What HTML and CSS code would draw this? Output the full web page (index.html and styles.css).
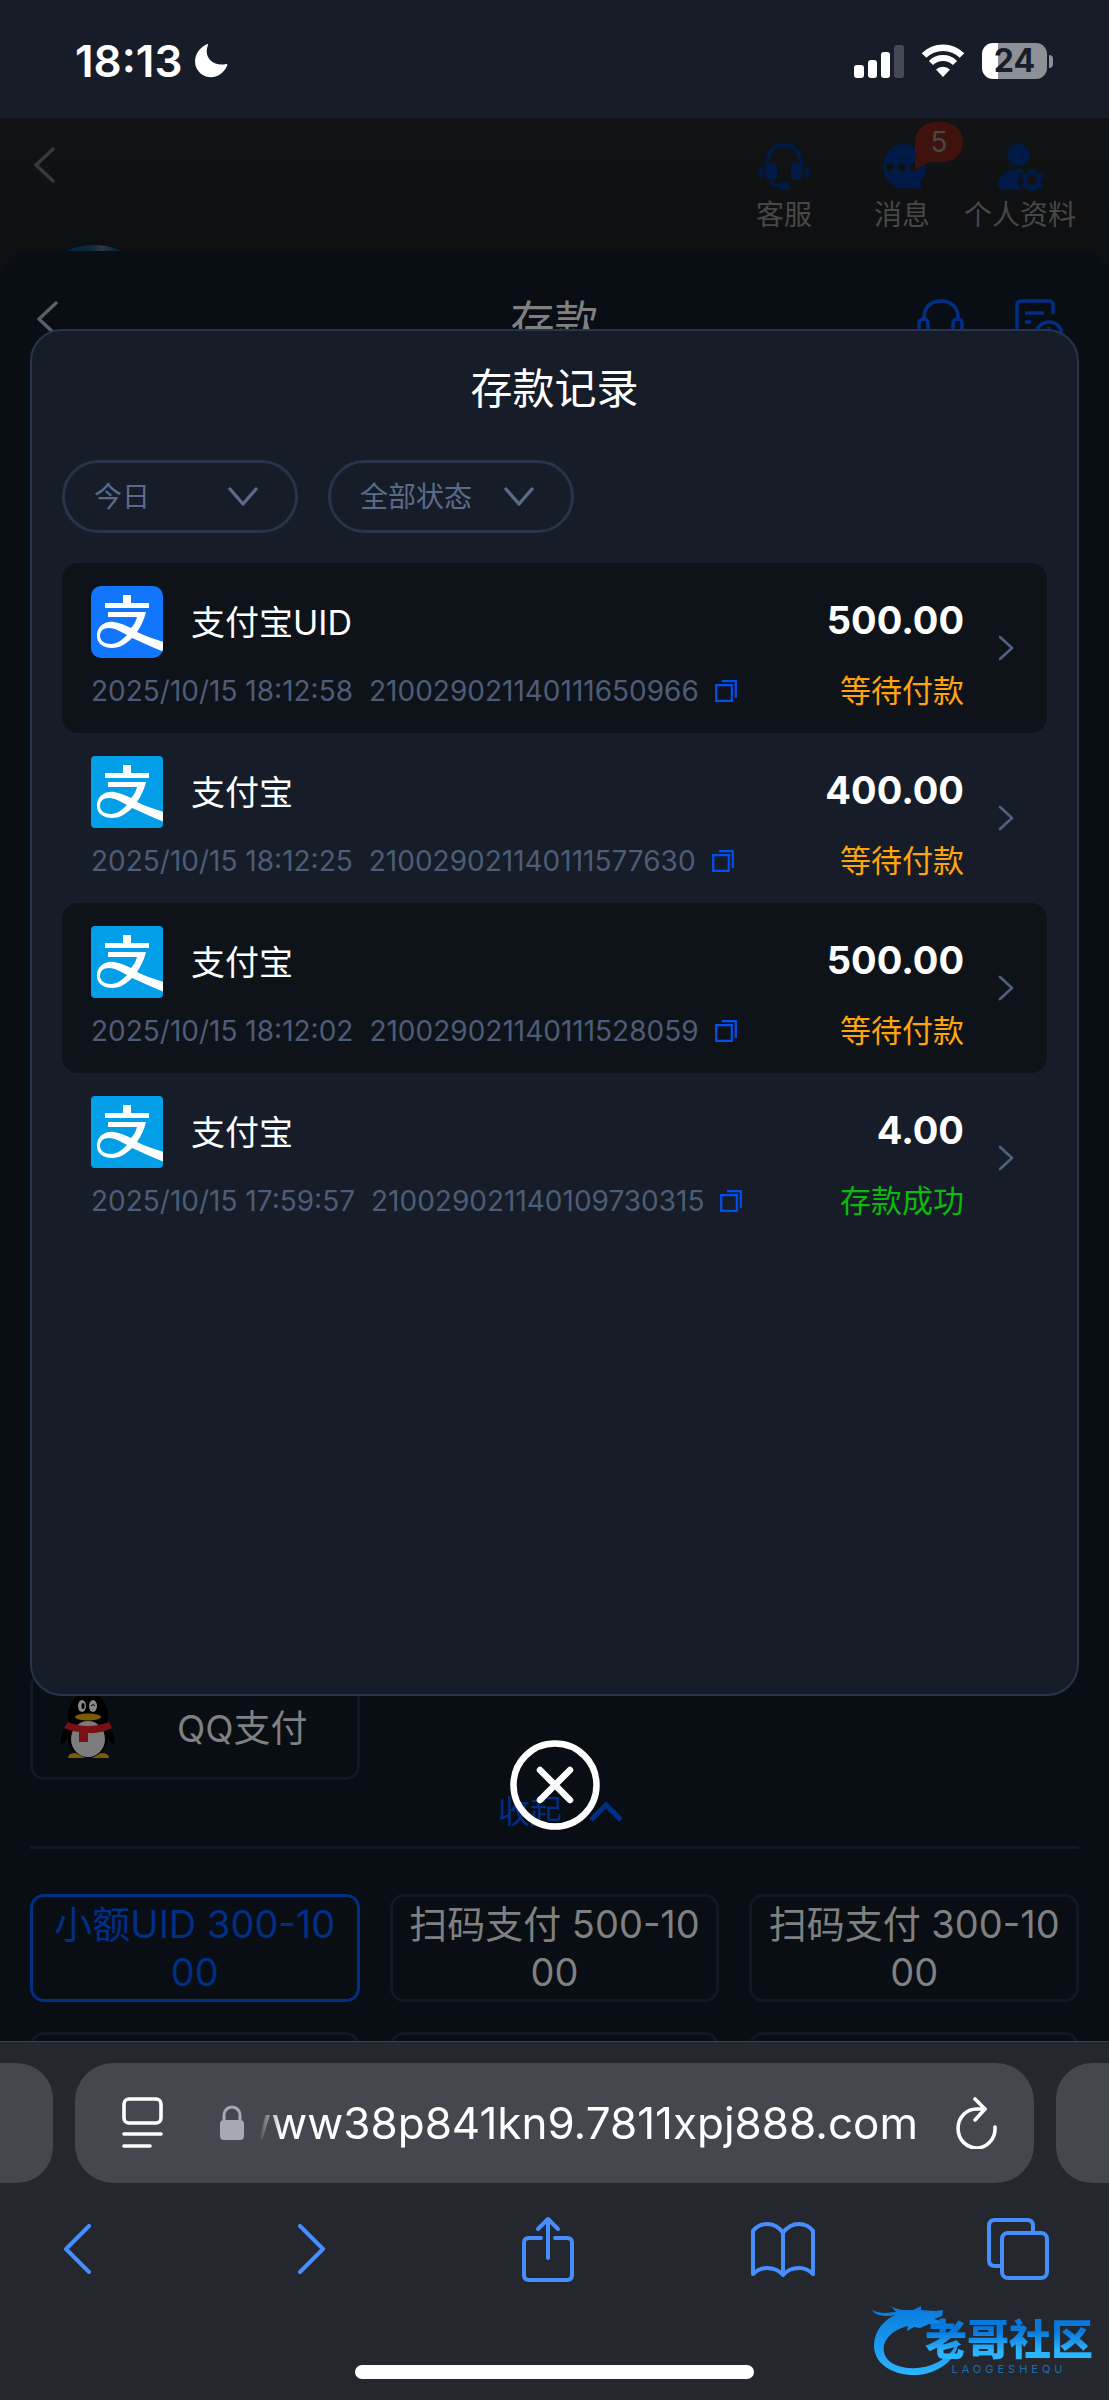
FILE: index.html
```html
<!DOCTYPE html>
<html lang="zh-CN">
<head>
<meta charset="utf-8">
<meta name="viewport" content="width=device-width, initial-scale=1">
<title>存款记录</title>
<link rel="stylesheet" href="styles.css">
</head>
<body>
<svg class="defs" aria-hidden="true">
  <symbol id="chev-left" viewBox="0 0 22 36"><path d="M20 2 3 18l17 16" fill="none" stroke="currentColor" stroke-width="3.5" stroke-linecap="round" stroke-linejoin="round"/></symbol>
  <symbol id="chev-right" viewBox="0 0 16 26"><path d="M2 2l12 11L2 24" fill="none" stroke="currentColor" stroke-width="2.6" stroke-linecap="round" stroke-linejoin="round"/></symbol>
  <symbol id="chev-down" viewBox="0 0 30 20"><path d="M2 2l13 15L28 2" fill="none" stroke="currentColor" stroke-width="3.4" stroke-linecap="round" stroke-linejoin="round"/></symbol>
  <symbol id="copy" viewBox="0 0 22 22"><path d="M1.2 5.2h15.600v15.600H1.200zM7 1.200h13.800V18" fill="none" stroke="currentColor" stroke-width="2.2"/></symbol>
  <symbol id="alipay" viewBox="0 0 72 72">
    <path d="M32 9h8v11h-8zM14 17h44v5H14z" fill="#fff"/>
    <path d="M17 26h38c-2 8-5 14-9 20 8 4 17 7 27 10v10C61 61 50 56 41 52c-6 6-12 10-20 10C11 62 5 56 6 48c1-8 8-13 17-12 6 1 11 3 17 6 3-3 5-7 6-11H17zM36 49c-6-3-11-7-18-7-6 0-9 3-9 8 0 5 5 8 11 8 6 0 11-4 16-9z" fill="#fff" fill-rule="evenodd"/>
  </symbol>
</svg>

<div class="screen">
  <div class="status-bar">
    <div class="clock">
      <span>18:13</span>
      <svg width="34" height="36" viewBox="0 0 34 36"><path d="M13.500 1C3 5-2 17 3 26c6 11 23 12 30-3 1-1 0-2-1-2-13 3-23-7-18-19 0-1 0-1.500-.5-1z" fill="#fff"/></svg>
    </div>
    <div class="signals">
      <svg width="50" height="34" viewBox="0 0 50 34"><g fill="#fff"><rect y="21" width="10" height="13" rx="3"/><rect x="14" y="16" width="9" height="18" rx="3"/><rect x="27" y="8" width="9" height="26" rx="3"/><rect x="40" y="1" width="10" height="33" rx="3" opacity=".2"/></g></svg>
      <svg width="44" height="34" viewBox="0 0 44 34"><g fill="none" stroke="#fff"><path d="M3 11.500a27 27 0 0 1 38 0" stroke-width="6.500"/><path d="M10 19a17 17 0 0 1 24 0" stroke-width="6"/></g><path d="M22 33l-7-7.500a10 10 0 0 1 14 0z" fill="#fff"/></svg>
      <div class="battery"><span>24</span></div>
    </div>
  </div>

  <main class="page">
    <div class="behind">
      <header class="profile-bar">
        <button class="icon-btn back-dim" aria-label="返回"><svg width="22" height="36"><use href="#chev-left"/></svg></button>
        <nav class="shortcuts">
          <a href="#"><svg width="52" height="48" viewBox="0 0 52 48" fill="#001a48"><path d="M9 27V20C9 8 17 2 26 2s17 6 17 18v7" fill="none" stroke="#001a48" stroke-width="4"/><rect x="8" y="20" width="11" height="17" rx="4"/><rect x="33" y="20" width="11" height="17" rx="4"/><path d="M5 23v12c-6-1-6-11 0-12zM47 23v12c6-1 6-11 0-12z"/><path d="M12 36c1 6 5 7 11 7" fill="none" stroke="#001a48" stroke-width="3"/><rect x="21" y="39" width="11" height="8" rx="4"/></svg><span>客服</span></a>
          <a href="#"><svg width="46" height="48" viewBox="0 0 46 48"><path d="M23 1a22.500 22.500 0 1 0 12 43c3 2 6 2 8 1l-2-6A23 23 0 0 0 23 1z" fill="#001a48"/><g fill="#101113"><circle cx="11" cy="24" r="4"/><circle cx="23" cy="24" r="4"/><circle cx="35" cy="24" r="4"/></g></svg><span>消息</span><b class="badge"><svg width="48" height="50" viewBox="0 0 48 50"><path d="M20 1h8a20 20 0 0 1 0 40H14L0 49V21A20 20 0 0 1 20 1z" fill="#3f120d"/></svg><i>5</i></b></a>
          <a href="#"><svg width="48" height="48" viewBox="0 0 48 48" fill="#001a48"><circle cx="23" cy="12" r="11"/><path d="M24 26C10 26 2 33 2 42c0 3 3 5 8 5h15c-5-7-3-16 3-20z"/><path d="M34 26h5l1 4 3 1 3-1 2 5-3 2v3l3 2-2 4-4-1-2 1-1 3h-5l-1-3-3-1-3 1-2-4 3-3v-2l-3-2 2-5 3 1 3-1zm2 6a5 5 0 1 0 .1 10A5 5 0 0 0 36 32z" fill-rule="evenodd"/></svg><span>个人资料</span></a>
        </nav>
        <span class="avatar"></span>
      </header>

      <section class="sheet">
        <header class="sheet-head">
          <button class="icon-btn" aria-label="返回"><svg width="22" height="36"><use href="#chev-left"/></svg></button>
          <h2>存款</h2>
          <div class="sheet-tools">
            <svg width="48" height="46" viewBox="0 0 48 46" fill="none" stroke="#002f86" stroke-width="3.500"><path d="M7 22v-3C7 8 14 2 24 2s17 6 17 17v3"/><rect x="2" y="20" width="9" height="20" rx="4"/><rect x="36" y="20" width="9" height="20" rx="4"/></svg>
            <svg width="48" height="46" viewBox="0 0 48 46" fill="none" stroke="#002f86" stroke-width="3.500"><path d="M20 44H6q-4 0-4-4V6q0-4 4-4h28q4 0 4 4v9M10 14h19M10 23h6"/><circle cx="34" cy="36" r="13"/><path d="M34 28v8"/></svg>
          </div>
        </header>
        <div class="methods">
          <button class="method">
            <svg width="58" height="66" viewBox="0 0 58 66"><path d="M29 1C17 1 9 9 9 22v8C4 38 1 45 2 52l6-6c3 9 8 15 13 17h17c5-2 9-8 11-17l6 6c2-7-2-15-6-22v-8C49 9 41 1 29 1z" fill="#000"/><ellipse cx="29" cy="46" rx="17" ry="18" fill="#7d7d7d"/><ellipse cx="23" cy="13" rx="4" ry="6" fill="#888"/><ellipse cx="34" cy="13" rx="4" ry="6" fill="#888"/><ellipse cx="24" cy="13" rx="1.500" ry="3" fill="#000"/><path d="M32 13q2-3 4 0" stroke="#000" fill="none"/><ellipse cx="29" cy="24" rx="13" ry="3.500" fill="#7c5b05"/><path d="M9 29q20 8 41 0l3 6q-12 6-24 5v9h-9v-10q-8-1-15-4z" fill="#7a1013"/><path d="M9 65q0-5 8-5l9 5zM50 65q0-5-8-5l-9 5z" fill="#7c5b05"/></svg>
            <span>QQ支付</span>
          </button>
        </div>
        <button class="collapse">收起<svg width="34" height="22" viewBox="0 0 34 22"><path d="M2 19 17 4l15 15" fill="none" stroke="#002f86" stroke-width="5"/></svg></button>
        <div class="channels">
          <button class="channel is-active">小额UID 300-1000</button>
          <button class="channel">扫码支付 500-1000</button>
          <button class="channel">扫码支付 300-1000</button>
        </div>
        <div class="channels next-row" aria-hidden="true"><div class="channel"></div><div class="channel"></div><div class="channel"></div></div>
      </section>
    </div>

    <div class="overlay">
      <section class="modal" role="dialog" aria-labelledby="modal-title">
        <h1 id="modal-title">存款记录</h1>
        <div class="filters">
          <label class="filter"><select aria-label="日期"><option>今日</option></select><svg width="30" height="20"><use href="#chev-down"/></svg></label>
          <label class="filter filter-state"><select aria-label="状态"><option>全部状态</option></select><svg width="30" height="20"><use href="#chev-down"/></svg></label>
        </div>
        <ul class="records">
          <li class="record">
            <div class="record-body">
              <div class="payee"><span class="logo logo-uid"><svg width="72" height="72"><use href="#alipay"/></svg></span><span class="payee-name">支付宝UID</span></div>
              <strong class="amount">500.00</strong>
              <div class="meta"><time>2025/10/15 18:12:58</time><span>210029021140111650966</span><button class="copy" aria-label="复制"><svg width="22" height="22"><use href="#copy"/></svg></button></div>
              <span class="state">等待付款</span>
            </div>
            <svg class="go" width="16" height="26"><use href="#chev-right"/></svg>
          </li>
          <li class="record">
            <div class="record-body">
              <div class="payee"><span class="logo"><svg width="72" height="72"><use href="#alipay"/></svg></span><span class="payee-name">支付宝</span></div>
              <strong class="amount">400.00</strong>
              <div class="meta"><time>2025/10/15 18:12:25</time><span>210029021140111577630</span><button class="copy" aria-label="复制"><svg width="22" height="22"><use href="#copy"/></svg></button></div>
              <span class="state">等待付款</span>
            </div>
            <svg class="go" width="16" height="26"><use href="#chev-right"/></svg>
          </li>
          <li class="record">
            <div class="record-body">
              <div class="payee"><span class="logo"><svg width="72" height="72"><use href="#alipay"/></svg></span><span class="payee-name">支付宝</span></div>
              <strong class="amount">500.00</strong>
              <div class="meta"><time>2025/10/15 18:12:02</time><span>210029021140111528059</span><button class="copy" aria-label="复制"><svg width="22" height="22"><use href="#copy"/></svg></button></div>
              <span class="state">等待付款</span>
            </div>
            <svg class="go" width="16" height="26"><use href="#chev-right"/></svg>
          </li>
          <li class="record">
            <div class="record-body">
              <div class="payee"><span class="logo"><svg width="72" height="72"><use href="#alipay"/></svg></span><span class="payee-name">支付宝</span></div>
              <strong class="amount">4.00</strong>
              <div class="meta"><time>2025/10/15 17:59:57</time><span>210029021140109730315</span><button class="copy" aria-label="复制"><svg width="22" height="22"><use href="#copy"/></svg></button></div>
              <span class="state state-done">存款成功</span>
            </div>
            <svg class="go" width="16" height="26"><use href="#chev-right"/></svg>
          </li>
        </ul>
      </section>
      <button class="close" aria-label="关闭"><svg width="90" height="90" viewBox="0 0 90 90" fill="none" stroke="#fff"><circle cx="45" cy="45" r="41.500" stroke-width="6.500"/><path d="M30 30l30 30M60 30 30 60" stroke-width="6.500" stroke-linecap="round"/></svg></button>
    </div>
  </main>

  <footer class="browser">
    <div class="tabs">
      <span class="tab-edge tab-prev"></span>
      <div class="address">
        <button class="icon-btn" aria-label="页面菜单"><svg width="42" height="52" viewBox="0 0 42 52" fill="none" stroke="#fff" stroke-width="3.600" stroke-linecap="round"><rect x="2" y="2" width="37" height="24" rx="5"/><path d="M2 37h37M2 49h26"/></svg></button>
        <svg class="lock" width="26" height="36" viewBox="0 0 26 36"><rect x="1" y="15" width="24" height="20" rx="4" fill="#a7a8b1"/><path d="M5 16v-6a8 8 0 0 1 16 0v6" fill="none" stroke="#a7a8b1" stroke-width="3"/></svg>
        <button class="url"><span>www38p841kn9.7811xpj888.com</span></button>
        <button class="icon-btn" aria-label="刷新"><svg width="42" height="52" viewBox="0 0 42 52" fill="none" stroke="#fff" stroke-width="3.600" stroke-linecap="round" stroke-linejoin="round"><path d="M39 30A18.500 19.500 0 1 1 21 12h8"/><path d="M19 2l10 10-10 11"/></svg></button>
      </div>
      <span class="tab-edge tab-next"></span>
    </div>
    <nav class="toolbar">
      <button class="icon-btn" aria-label="后退"><svg width="28" height="50" viewBox="0 0 28 50"><path d="M26 2 3 25l23 23"/></svg></button>
      <button class="icon-btn" aria-label="前进"><svg width="28" height="50" viewBox="0 0 28 50"><path d="M2 2l23 23L2 48"/></svg></button>
      <button class="icon-btn" aria-label="分享"><svg width="52" height="66" viewBox="0 0 52 66"><path d="M19 22H7q-5 0-5 5v32q0 5 5 5h38q5 0 5-5V27q0-5-5-5H33M26 42V3M16 13 26 3l10 10"/></svg></button>
      <button class="icon-btn" aria-label="书签"><svg width="64" height="56" viewBox="0 0 64 56"><path d="M32 12Q26 3 16 3 7 3 2 10v43q6-6 14-6 10 0 16 7 6-7 16-7 8 0 14 6V10Q57 3 48 3 38 3 32 12v42"/></svg></button>
      <button class="icon-btn" aria-label="标签页"><svg width="62" height="62" viewBox="0 0 62 62"><path d="M46 14V8q0-6-6-6H8Q2 2 2 8v34q0 6 6 6h7"/><rect x="15" y="15" width="45" height="45" rx="6"/></svg></button>
    </nav>
    <div class="home-bar"></div>
    <div class="mark">
      <svg width="100" height="80" viewBox="0 0 100 80"><defs><linearGradient id="wave" x1="0" y1="0" x2="0" y2="1"><stop offset="0" stop-color="#0878dc"/><stop offset="1" stop-color="#2bb4ff"/></linearGradient></defs><path d="M1 12c8 4 16 3 24 2l-5-6c8 5 16 4 22 4l8-4v4l14 1 8-1-1 6-8 3 7 2-2 6-10-3-9 4-6-1-7 4 1-5C20 32 11 43 13 54c3 17 34 21 54 10 10-5 16-12 20-22 1 18-18 33-40 35C19 78 2 64 3 46 4 32 13 22 24 17 14 19 5 18 1 12z" fill="url(#wave)"/></svg>
      <div class="mark-text"><b>老哥社区</b><small>LAOGESHEQU</small></div>
    </div>
  </footer>
</div>
</body>
</html>
```
FILE: styles.css
```css
* { box-sizing: border-box; margin: 0; padding: 0; }

body {
  background: #090d14;
  color: #fff;
  font-family: Inter, "Noto Sans CJK SC", sans-serif;
}

button {
  background: none;
  border: 0;
  color: inherit;
  font: inherit;
}

a { color: inherit; text-decoration: none; }
svg { display: block; flex: none; }
.defs { position: absolute; width: 0; height: 0; }
.icon-btn { display: flex; align-items: center; justify-content: center; }

.screen {
  display: grid;
  grid-template-rows: auto 1fr auto;
  min-height: 100vh;
}

/* Status bar */
.status-bar {
  display: flex;
  justify-content: space-between;
  align-items: center;
  height: 118px;
  padding: 4px 56px 0 75px;
  background: #161d28;
}

.clock {
  display: flex;
  align-items: center;
  gap: 12px;
  font-size: 44px;
  font-weight: 600;
  line-height: 48px;
}

.signals { display: flex; align-items: center; gap: 17px; }

.battery {
  position: relative;
  width: 65px;
  height: 36px;
  margin-right: 6px;
  border-radius: 11px;
  background: linear-gradient(90deg, #fff 16px, #8e9097 16px);
  color: #171e29;
  font-size: 32px;
  font-weight: 700;
  line-height: 36px;
  text-align: center;
}

.battery::after {
  content: "";
  position: absolute;
  right: -6px;
  top: 12px;
  width: 4px;
  height: 13px;
  border-radius: 0 4px 4px 0;
  background: #8e9097;
}

/* Dimmed page under the dialog */
.page { display: grid; }
.behind, .overlay { grid-area: 1 / 1; min-width: 0; }

.behind {
  display: flex;
  flex-direction: column;
  background: #0e0f12;
}

.profile-bar {
  position: relative;
  display: flex;
  justify-content: space-between;
  height: 133px;
  padding: 25px 30px 0 33px;
  overflow: hidden;
  background: linear-gradient(#121315, #0e0f11);
}

.profile-bar .icon-btn { align-self: flex-start; padding-top: 4px; color: #38393b; }

.avatar {
  position: absolute;
  left: 26px;
  top: 127px;
  width: 136px;
  height: 136px;
  border-radius: 50%;
  background: linear-gradient(100deg, #06273d 40%, #30373c 48%, #06273d 56%);
}

.shortcuts { display: flex; }

.shortcuts a {
  position: relative;
  display: flex;
  flex-direction: column;
  align-items: center;
  gap: 4px;
  width: 118px;
  color: #474747;
  font-size: 28px;
  line-height: 40px;
  white-space: nowrap;
}

.badge {
  position: absolute;
  left: 72px;
  top: -22px;
  font-weight: 400;
}

.badge i {
  position: absolute;
  inset: 0;
  font-style: normal;
  line-height: 42px;
  text-align: center;
}

.sheet {
  display: flex;
  flex: 1;
  flex-direction: column;
  padding: 0 30px;
  border-radius: 30px 30px 0 0;
  background: #090d14;
}

.sheet-head {
  display: grid;
  grid-template-columns: 1fr auto 1fr;
  align-items: center;
  height: 142px;
  padding: 0 6px;
  color: #808080;
}

.sheet-head .icon-btn { justify-self: start; padding-bottom: 6px; color: #5b5e63; }
.sheet-head h2 { font-size: 44px; font-weight: 400; line-height: 60px; }
.sheet-tools { display: flex; gap: 50px; justify-self: end; margin-right: 10px; }

.methods {
  display: grid;
  grid-template-columns: repeat(3, 1fr);
  gap: 30px;
  margin-top: auto;
}

.method {
  display: flex;
  align-items: center;
  height: 108px;
  padding: 0 26px;
  gap: 60px;
  border: 3px solid #121922;
  border-radius: 14px;
  color: #808080;
  font-size: 37px;
}

.collapse {
  display: flex;
  align-items: center;
  justify-content: center;
  gap: 27px;
  padding: 8px 0 10px 12px;
  border-bottom: 3px solid #121922;
  color: #002f86;
  font-size: 32px;
  line-height: 48px;
}

.channels {
  display: grid;
  grid-template-columns: repeat(3, 1fr);
  gap: 30px;
  margin-top: 45px;
}

.channel {
  min-height: 108px;
  padding: 3px 14px;
  border: 3px solid #121922;
  border-radius: 14px;
  color: #808080;
  font-size: 38px;
  line-height: 48px;
  text-align: center;
  word-break: break-all;
}

.channel.is-active { border-color: #002f86; color: #002f86; }
.next-row { height: 9px; margin-top: 30px; overflow: hidden; }

/* Dialog */
.overlay {
  z-index: 1;
  display: flex;
  flex-direction: column;
  align-items: center;
  gap: 44px;
  padding: 211px 30px;
}

.modal {
  flex: 1;
  width: 100%;
  padding: 30px 30px 32px;
  border: 2px solid #27344a;
  border-radius: 32px;
  background: #161d28;
}

.modal h1 {
  font-size: 42px;
  font-weight: 400;
  line-height: 56px;
  text-align: center;
}

.filters { display: flex; gap: 30px; margin: 43px 0 30px; }

.filter {
  display: flex;
  align-items: center;
  width: 236px;
  height: 73px;
  padding-right: 37px;
  border: 3px solid #27344a;
  border-radius: 37px;
  color: #5a6b88;
}

.filter-state { width: 246px; }

.filter select {
  flex: 1;
  min-width: 0;
  padding-left: 29px;
  appearance: none;
  border: 0;
  background: none;
  color: inherit;
  font: inherit;
  font-size: 28px;
  line-height: 40px;
}

.records { list-style: none; }

.record {
  display: flex;
  align-items: center;
  gap: 34px;
  height: 170px;
  padding: 0 33px 0 29px;
  border-radius: 16px;
}

.record:nth-child(odd) { background: #0e131a; }

.record-body {
  display: grid;
  flex: 1;
  grid-template-columns: 1fr auto;
  grid-template-rows: 72px 32px;
  row-gap: 17px;
  padding-bottom: 3px;
  align-items: center;
}

.payee { display: flex; align-items: center; gap: 28px; font-size: 34px; }
.payee-name, .amount { padding-bottom: 4px; }

.logo {
  overflow: hidden;
  border-radius: 4px;
  background: #029fe8;
}

.logo-uid { border-radius: 10px; background: #1276fd; }

.amount { font-size: 38px; font-weight: 700; text-align: right; }

.meta {
  display: flex;
  align-items: center;
  gap: 16px;
  color: #4d5c77;
  font-size: 28px;
  line-height: 32px;
}

.copy { color: #0050f0; }
.state { color: #ffa40b; font-size: 31px; line-height: 32px; text-align: right; }
.state-done { color: #0bb80b; }
.go { color: #50617d; }
.close { display: block; border-radius: 50%; }

/* Browser chrome */
.browser {
  position: relative;
  z-index: 2;
  padding: 21px 0;
  border-top: 1px solid #3b3e43;
  background: #24272e;
}

.tabs {
  display: grid;
  grid-template-columns: 53px 1fr 53px;
  gap: 22px;
  height: 120px;
}

.tab-edge, .address { background: #44474d; }
.tab-prev { border-radius: 0 36px 36px 0; }
.tab-next { border-radius: 36px 0 0 36px; }

.address {
  display: flex;
  align-items: center;
  min-width: 0;
  padding: 0 36px 0 47px;
  border-radius: 38px;
}

.lock { margin-left: 55px; }

.url {
  display: flex;
  flex: 1;
  justify-content: flex-end;
  min-width: 0;
  margin: 0 38px 0 14px;
  overflow: hidden;
  font-size: 44px;
  line-height: 60px;
  white-space: nowrap;
  mask-image: linear-gradient(90deg, transparent, #000 22px);
}

.toolbar {
  display: flex;
  align-items: center;
  justify-content: space-between;
  height: 66px;
  margin-top: 33px;
  padding: 0 59px 0 45px;
}

.toolbar .icon-btn { width: 64px; }

.toolbar path, .toolbar rect {
  fill: none;
  stroke: #468eff;
  stroke-width: 4;
  stroke-linecap: round;
  stroke-linejoin: round;
}

.home-bar {
  width: 36%;
  height: 14px;
  margin: 83px auto 0;
  border-radius: 7px;
  background: #fff;
}

/* Community mark laid over the toolbar corner */
.mark {
  position: absolute;
  right: 16px;
  bottom: 22px;
  width: 222px;
  height: 80px;
}

.mark-text {
  position: absolute;
  right: 0;
  top: 20px;
  display: flex;
  flex-direction: column;
  align-items: center;
}

.mark b {
  background: linear-gradient(#0878dc 30%, #2bb4ff 75%);
  background-clip: text;
  color: transparent;
  font-size: 42px;
  font-weight: 900;
  line-height: 44px;
}

.mark small {
  color: #1c6fae;
  font-size: 11px;
  letter-spacing: 4px;
  line-height: 14px;
}
```
